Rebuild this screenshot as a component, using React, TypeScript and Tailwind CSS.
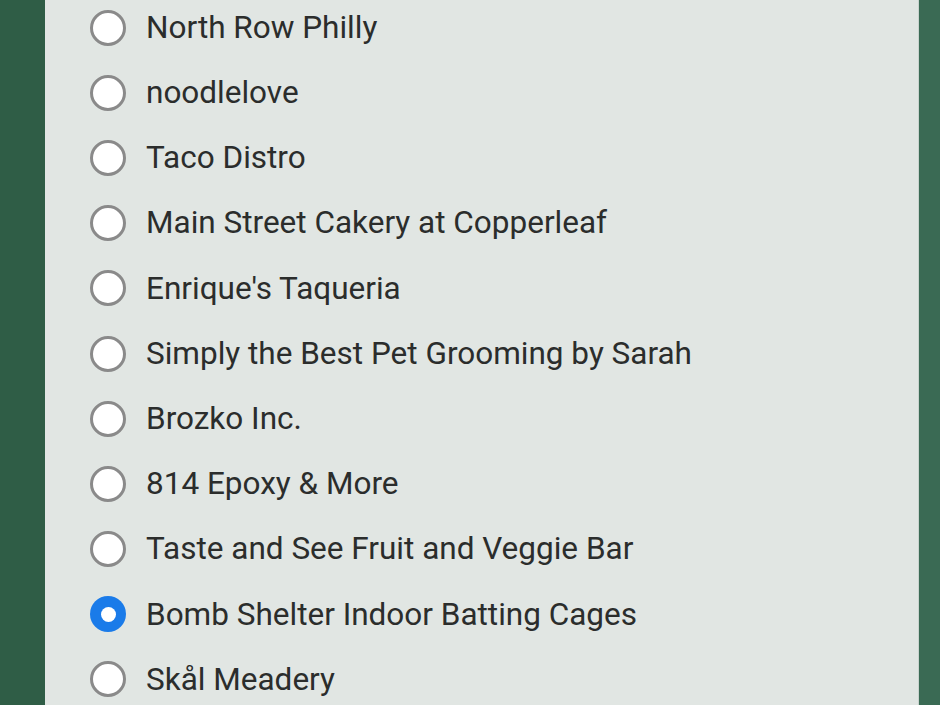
import React, { useState } from 'react';

const businesses = [
  'North Row Philly',
  'noodlelove',
  'Taco Distro',
  'Main Street Cakery at Copperleaf',
  "Enrique's Taqueria",
  'Simply the Best Pet Grooming by Sarah',
  'Brozko Inc.',
  '814 Epoxy & More',
  'Taste and See Fruit and Veggie Bar',
  'Bomb Shelter Indoor Batting Cages',
  'Skål Meadery',
];

const Radio = ({ checked }: { checked: boolean }) =>
  checked ? (
    <span className="flex h-[36px] w-[36px] shrink-0 items-center justify-center rounded-full bg-[#1a7be9]">
      <span className="h-[15px] w-[15px] rounded-full bg-white" />
    </span>
  ) : (
    <span className="h-[36px] w-[36px] shrink-0 rounded-full border-[3px] border-[#8a8a8a] bg-white" />
  );

export default function App() {
  const [selected, setSelected] = useState(9);

  return (
    <div className="flex h-[705px] w-[940px] overflow-hidden bg-[#2f5e47] font-['Roboto',sans-serif]">
      <div className="w-[45px] shrink-0 bg-[#2f5d46]" />
      <div className="w-[873px] shrink-0 bg-[#e1e6e3]">
        <ul className="-mt-[5px] pl-[45px]">
          {businesses.map((name, i) => (
            <li
              key={name}
              className="flex h-[65.2px] cursor-pointer items-center gap-[20px]"
              onClick={() => setSelected(i)}
            >
              <Radio checked={selected === i} />
              <span className="text-[31.5px] leading-none text-[#2b2d2c]">{name}</span>
            </li>
          ))}
        </ul>
      </div>
      <div className="w-[1px] shrink-0 bg-[#c9d3ce]" />
      <div className="flex-1 bg-[#3a6a54]" />
    </div>
  );
}
